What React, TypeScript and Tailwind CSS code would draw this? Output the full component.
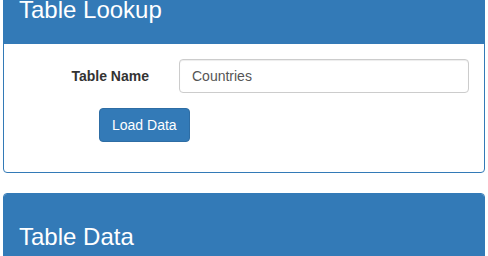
import React from "react";

export default function App() {
  return (
    <div className="px-[3px] font-['Liberation_Sans',Arial,Helvetica,sans-serif] text-[14px] leading-[20px] text-[#333] bg-white h-[256px] overflow-hidden">
      <div className="mt-[-34px] mb-[20px] border border-[#337ab7] rounded-[4px] bg-white">
        <div className="bg-[#337ab7] border-b border-[#337ab7] px-[15px] py-[10px] text-white rounded-t-[3px]">
          <h3 className="mt-[20px] mb-[10px] text-[24px] leading-[1.1] font-normal">Table Lookup</h3>
        </div>
        <div className="p-[15px]">
          <div className="flex mx-[-15px] mb-[15px]">
            <label className="w-1/3 px-[15px] pt-[7px] text-right font-bold">Table Name</label>
            <div className="w-2/3 px-[15px]">
              <input
                type="text"
                defaultValue="Countries"
                className="block w-full h-[34px] px-[12px] py-[6px] border border-[#ccc] rounded-[4px] text-[#555] text-[14px] leading-[20px] bg-white shadow-[inset_0_1px_1px_rgba(0,0,0,0.075)] outline-none"
              />
            </div>
          </div>
          <div className="flex mx-[-15px] mb-[15px]">
            <div className="ml-[16.666667%] px-[15px]">
              <button
                type="button"
                className="h-[34px] px-[12px] py-[6px] bg-[#337ab7] border border-[#2e6da4] rounded-[4px] text-white text-[14px] leading-[20px]"
              >
                Load Data
              </button>
            </div>
          </div>
        </div>
      </div>
      <div className="border border-[#337ab7] rounded-[4px] bg-white">
        <div className="bg-[#337ab7] border-b border-[#337ab7] px-[15px] py-[10px] text-white rounded-t-[3px]">
          <h3 className="mt-[20px] mb-[10px] text-[24px] leading-[1.1] font-normal">Table Data</h3>
        </div>
        <div className="p-[15px] h-[100px]"></div>
      </div>
    </div>
  );
}
